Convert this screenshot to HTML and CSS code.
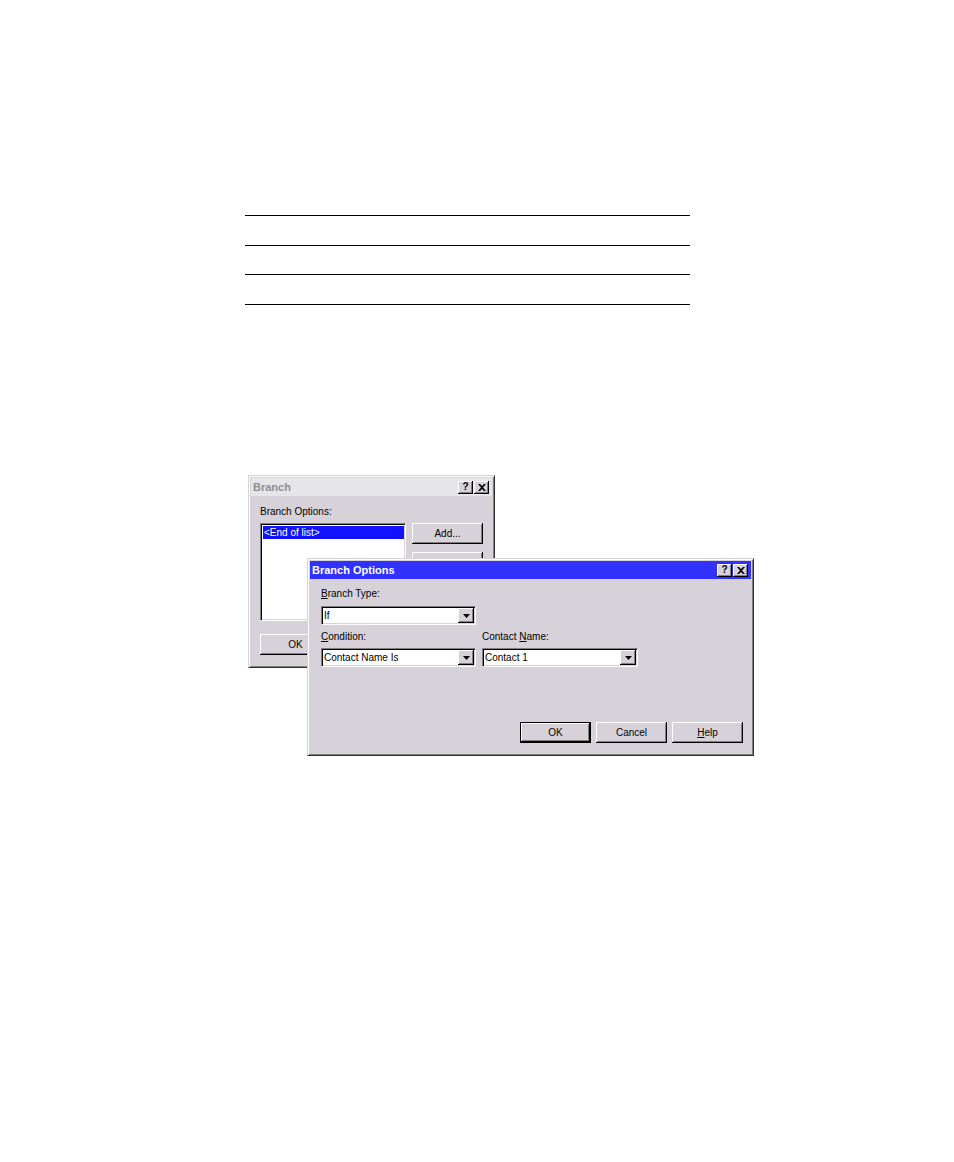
FILE: index.html
```html
<!DOCTYPE html>
<html>
<head>
<meta charset="utf-8">
<title>Branch Options</title>
<link rel="stylesheet" href="styles.css">
</head>
<body>
<div class="rules">
  <div class="rule"></div>
  <div class="rule"></div>
  <div class="rule r3"></div>
  <div class="rule"></div>
</div>

<div class="desk">
  <div class="win back">
    <div class="titlebar inactive">
      <span class="title">Branch</span>
      <div class="caps">
        <span class="cap">?</span>
        <span class="cap"><svg width="8" height="7" viewBox="0 0 8 7"><path d="M0 0h2l2 2 2-2h2L5 3.5 8 7H6L4 5 2 7H0l3-3.5z" fill="#000"/></svg></span>
      </div>
    </div>
    <div class="bbody">
      <div class="lbl">Branch Options:</div>
      <div class="brow">
        <div class="listbox"><div class="item sel">&lt;End of list&gt;</div></div>
        <div class="side">
          <div class="btn">Add...</div>
          <div class="btn edit">Edit...</div>
        </div>
      </div>
      <div class="btn bok">OK</div>
    </div>
  </div>

  <div class="win front">
    <div class="titlebar">
      <span class="title">Branch Options</span>
      <div class="caps">
        <span class="cap">?</span>
        <span class="cap"><svg width="8" height="7" viewBox="0 0 8 7"><path d="M0 0h2l2 2 2-2h2L5 3.5 8 7H6L4 5 2 7H0l3-3.5z" fill="#000"/></svg></span>
      </div>
    </div>
    <div class="fbody">
      <div class="grid">
        <div class="lbl"><u>B</u>ranch Type:</div>
        <div></div>
        <div class="combo gap1">
          <span class="ctext">If</span>
          <span class="cbtn"><svg width="7" height="4" viewBox="0 0 7 4"><path d="M0 0h7L3.5 4z" fill="#000"/></svg></span>
        </div>
        <div></div>
        <div class="lbl gap2"><u>C</u>ondition:</div>
        <div class="lbl gap2">Contact <u>N</u>ame:</div>
        <div class="combo gap1">
          <span class="ctext">Contact Name Is</span>
          <span class="cbtn"><svg width="7" height="4" viewBox="0 0 7 4"><path d="M0 0h7L3.5 4z" fill="#000"/></svg></span>
        </div>
        <div class="combo gap1">
          <span class="ctext">Contact 1</span>
          <span class="cbtn"><svg width="7" height="4" viewBox="0 0 7 4"><path d="M0 0h7L3.5 4z" fill="#000"/></svg></span>
        </div>
      </div>
      <div class="actions">
        <div class="btn def">OK</div>
        <div class="btn">Cancel</div>
        <div class="btn"><span><u>H</u>elp</span></div>
      </div>
    </div>
  </div>
</div>
</body>
</html>
```
FILE: styles.css
```css
:root {
  --face: #d7d2d9;
}
body {
  margin: 0;
  background: #fff;
  font-family: "Liberation Sans", Arial, sans-serif;
  font-size: 10px;
  color: #000;
}
.rules {
  margin: 215px 0 0 245px;
  width: 445px;
  display: flex;
  flex-direction: column;
  gap: 29px;
}
.rule {
  height: 1px;
  background: #000;
}
.rule.r3 {
  margin-top: -1px;
}
.desk {
  position: relative;
  margin-top: 170px;
  height: 300px;
}
.win {
  position: absolute;
  box-sizing: border-box;
  background: var(--face);
  border: 1px solid;
  border-color: var(--face) #303030 #303030 var(--face);
  box-shadow: inset 1px 1px #fff, inset -1px -1px #808080;
  padding: 2px;
  display: flex;
  flex-direction: column;
}
.back {
  left: 248px;
  top: 0;
  width: 247px;
  height: 193px;
}
.front {
  left: 307px;
  top: 83px;
  width: 447px;
  height: 198px;
}
.titlebar {
  height: 18px;
  flex: none;
  display: flex;
  align-items: center;
  padding: 0 3px 0 2px;
  background: #3232ff;
  color: #fff;
  font-size: 11px;
  font-weight: bold;
}
.titlebar.inactive {
  background: #e6e6e8;
  color: #8e8e8e;
}
.title {
  flex: 1;
}
.caps {
  display: flex;
  gap: 1px;
}
.cap {
  width: 15px;
  height: 13px;
  box-sizing: border-box;
  background: var(--face);
  box-shadow: inset -1px -1px #000, inset 1px 1px #fff, inset -2px -2px #808080;
  display: flex;
  align-items: center;
  justify-content: center;
  color: #000;
  font-size: 10px;
  font-weight: bold;
  line-height: 1;
}
.cap svg {
  display: block;
}
.lbl {
  height: 13px;
  line-height: 13px;
  white-space: nowrap;
}
.btn {
  width: 71px;
  height: 21px;
  box-sizing: border-box;
  background: var(--face);
  box-shadow: inset -1px -1px #000, inset 1px 1px #fff, inset -2px -2px #808080;
  display: flex;
  align-items: center;
  justify-content: center;
  white-space: nowrap;
}
.btn.def {
  box-shadow: inset 0 0 0 1px #000, inset -2px -2px #000, inset 2px 2px #fff, inset -3px -3px #808080;
}
/* back window */
.bbody {
  padding: 9px 0 0 9px;
  display: flex;
  flex-direction: column;
}
.brow {
  display: flex;
  gap: 6px;
  margin-top: 5px;
}
.listbox {
  width: 146px;
  height: 98px;
  box-sizing: border-box;
  background: #fff;
  border: 1px solid;
  border-color: #808080 #fff #fff #808080;
  box-shadow: inset 1px 1px #000, inset -1px -1px var(--face);
  padding: 2px 1px 1px 2px;
}
.item {
  height: 13px;
  line-height: 13px;
  padding-left: 1px;
}
.item.sel {
  background: #1212ff;
  color: #fff;
}
.side {
  display: flex;
  flex-direction: column;
}
.edit {
  margin-top: 8px;
}
.bok {
  margin-top: 13px;
}
/* front window */
.fbody {
  padding: 8px 0 0 11px;
  display: flex;
  flex-direction: column;
}
.grid {
  display: grid;
  grid-template-columns: 155px 156px;
  column-gap: 6px;
}
.gap1 {
  margin-top: 6px;
}
.gap2 {
  margin-top: 5px;
}
.grid .combo:nth-child(n+7) {
  margin-top: 5px;
}
.combo {
  height: 19px;
  box-sizing: border-box;
  background: #fff;
  border: 1px solid;
  border-color: #808080 #fff #fff #808080;
  box-shadow: inset 1px 1px #000, inset -1px -1px var(--face);
  padding: 1px;
  display: flex;
}
.ctext {
  flex: 1;
  padding-left: 1px;
  line-height: 15px;
  white-space: nowrap;
}
.cbtn {
  width: 16px;
  height: 15px;
  box-sizing: border-box;
  background: var(--face);
  box-shadow: inset -1px -1px #000, inset 1px 1px #fff, inset -2px -2px #808080;
  display: flex;
  align-items: center;
  justify-content: center;
}
.cbtn svg {
  display: block;
}
.actions {
  margin-top: 55px;
  display: flex;
  justify-content: flex-end;
  gap: 5px;
  padding-right: 8px;
}
```
